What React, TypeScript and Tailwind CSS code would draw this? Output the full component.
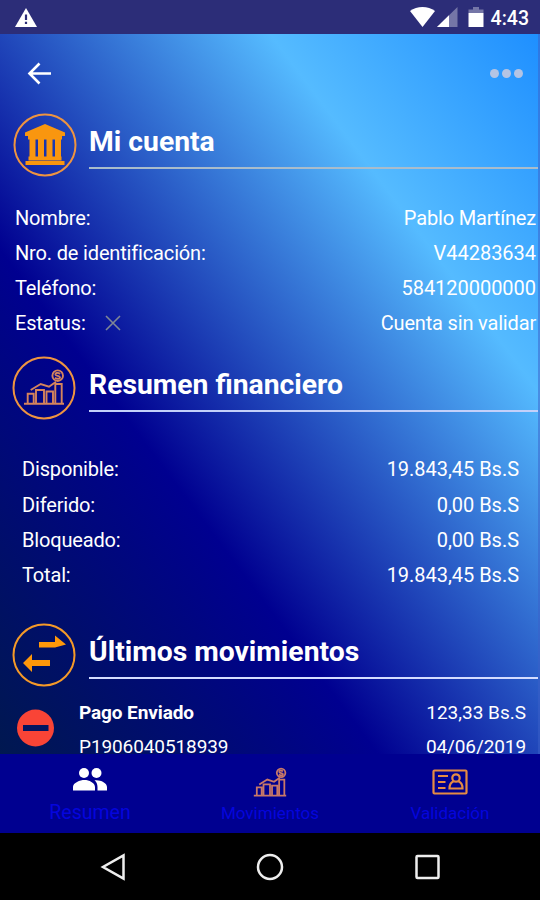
import type { ReactNode } from 'react';

const account = [
  { label: 'Nombre:', value: 'Pablo Martínez' },
  { label: 'Nro. de identificación:', value: 'V44283634' },
  { label: 'Teléfono:', value: '584120000000' },
  { label: 'Estatus:', value: 'Cuenta sin validar', invalid: true },
];

const balances = [
  { label: 'Disponible:', value: '19.843,45 Bs.S' },
  { label: 'Diferido:', value: '0,00 Bs.S' },
  { label: 'Bloqueado:', value: '0,00 Bs.S' },
  { label: 'Total:', value: '19.843,45 Bs.S' },
];

function BankIcon() {
  return (
    <svg viewBox="0 0 64 64" className="ml-px h-16 w-16" fill="#f9960f">
      <circle cx="32" cy="32" r="30.5" fill="none" stroke="#ee9440" strokeWidth="2" />
      <path d="M32 11 52 19.5V23H12v-3.5z" />
      <path d="M15 23h34v3.5H15zM15.5 43.500h33v4h-33zM12.500 48h39v4h-39z" />
      <path d="M16.500 26h6v19h-6zM25 26h6v19h-6zM33.500 26h6v19h-6zM42 26h6v19h-6z" />
    </svg>
  );
}

function ChartShapes() {
  return (
    <>
      <path d="M0 30.700h40M3.700 30v-9.300h6V30M12 30V17h8v13M22.500 30V18.500h6.500V30M31.300 30V11h6.400v19" />
      <path d="M6.700 17l10-6 8.300 2.700 7-5" />
      <circle cx="33.700" cy="2.700" r="5.300" />
      <path d="M36 1c-2-2-5-1-4.500.7.500 1.500 4.500 1 4.500 2.700 0 1.700-3 1.900-5 .3" />
    </>
  );
}

function ChartIcon() {
  return (
    <svg viewBox="0 0 64 64" className="h-16 w-16" fill="none" stroke="#d5845c" strokeWidth="1.900">
      <circle cx="32" cy="32" r="30.5" stroke="#ee9440" strokeWidth="2" />
      <g transform="translate(12 17)">
        <ChartShapes />
      </g>
    </svg>
  );
}

function TransferIcon() {
  return (
    <svg viewBox="0 0 64 64" className="h-16 w-16" fill="#ff980a">
      <circle cx="32" cy="32" r="30.5" fill="none" stroke="#f59a28" strokeWidth="2" />
      <path d="M27 19h16v-6.500l11 9-11 3H27z" />
      <path d="M38 37H20v-6l-9 9 9 9v-6h18z" />
    </svg>
  );
}

function SectionHeader({ icon, title, line }: { icon: ReactNode; title: string; line: string }) {
  return (
    <div className="flex h-16 pl-3">
      <div className="w-[77px]">{icon}</div>
      <div className={`mr-0.5 flex h-[56px] flex-1 items-center border-b-2 pt-[5px] ${line}`}>
        <h2 className="text-[28.300px] leading-none font-bold">{title}</h2>
      </div>
    </div>
  );
}

function Row({ label, value, invalid }: { label: string; value: string; invalid?: boolean }) {
  const numeric = /\d/.test(value);
  return (
    <div className="flex h-[35.2px] items-center justify-between">
      <span className="flex items-center tracking-[-0.16px]">
        {label}
        {invalid && (
          <svg viewBox="0 0 16 16" className="ml-[19px] h-4 w-4" stroke="#7f8796" strokeWidth="1.600">
            <path d="M1 1l14 14M15 1L1 15" />
          </svg>
        )}
      </span>
      <span className={numeric ? 'tracking-[-0.03px]' : 'tracking-[-0.17px]'}>{value}</span>
    </div>
  );
}

function StatusBar() {
  return (
    <div className="flex h-[34px] shrink-0 items-center justify-between bg-[#2c2d78] pr-[11px] pl-[14px]">
      <svg viewBox="0 0 24 20" className="h-5 w-6">
        <path d="M12 1 23 20H1z" fill="#fff" />
        <path d="M10.900 7.500h2.200V13h-2.200zM10.900 14.800h2.200V17h-2.200z" fill="#2c2d78" />
      </svg>
      <div className="flex items-center">
        <svg viewBox="0 0 76 22" className="mr-1.5 h-[22px] w-[76px]" fill="#fff">
          <path d="M1 5C8-.3 19-.3 26 5L13.500 21z" />
          <path d="M48.500 1v20H28z" opacity=".35" />
          <path d="M40 9.300V21H28z" />
          <path d="M59.500 3.500H64V1h6v2.500h4.500V7h-15z" opacity=".35" />
          <path d="M59.500 7h15v14h-15z" />
        </svg>
        <span className="pt-[3px] text-[19.500px] font-medium">4:43</span>
      </div>
    </div>
  );
}

function TabBar() {
  return (
    <div className="grid h-[79px] shrink-0 grid-cols-3 bg-[#000090] text-[17px] text-[#0505dc]">
      <div className="flex flex-col items-center">
        <svg viewBox="0 0 36 24" className="mt-[13px] h-6 w-9" fill="#fff">
          <circle cx="12" cy="6" r="5" />
          <circle cx="24.500" cy="6" r="5" />
          <path d="M1 23.500V20c0-4.300 7-7 11.500-7S23 15.700 23 20v3.500zM25.500 23.500V20c0-3-1.200-5-3-6.700 5-.9 12.500 2 12.500 6.700v3.500z" />
        </svg>
        <span className="mt-2.5 text-[19.500px] leading-6">Resumen</span>
      </div>
      <div className="flex flex-col items-center">
        <svg viewBox="-1 -4 42 36" className="mt-[13px] h-[30px] w-[34px]" fill="none" stroke="#c87868" strokeWidth="2.200">
          <ChartShapes />
        </svg>
        <span className="mt-1 leading-6">Movimientos</span>
      </div>
      <div className="flex flex-col items-center">
        <svg viewBox="0 0 36 26" className="mt-[15px] h-[26px] w-9" fill="none" stroke="#e58b43" strokeWidth="2.200">
          <rect x="1.500" y="1.500" width="33" height="23" rx="1" />
          <path d="M6 7h10M6 13h7.500M6 19h7.500" />
          <circle cx="24" cy="9" r="3.700" />
          <path d="M21.500 12.500c-3 1-4 4-4 7h13c0-3-1-6-4-7" />
        </svg>
        <span className="mt-1.5 leading-6">Validación</span>
      </div>
    </div>
  );
}

function NavBar() {
  return (
    <div className="flex h-[67px] shrink-0 items-center justify-between bg-black px-[99px]">
      <svg viewBox="0 0 28 28" className="h-7 w-7" fill="none" stroke="#eee" strokeWidth="2.500">
        <path d="M24.500 2.500v23L4 14z" />
      </svg>
      <svg viewBox="0 0 28 28" className="h-7 w-7" fill="none" stroke="#eee" strokeWidth="2.500">
        <circle cx="14" cy="14" r="12" />
      </svg>
      <svg viewBox="0 0 28 28" className="h-7 w-7" fill="none" stroke="#eee" strokeWidth="2.500">
        <rect x="3.500" y="3" width="22" height="22" rx="1" />
      </svg>
    </div>
  );
}

export default function App() {
  return (
    <div className="flex h-[900px] w-[540px] flex-col overflow-hidden bg-black font-['Roboto',sans-serif] text-[20px] leading-none text-white">
      <StatusBar />
      <main className="h-[720px] overflow-hidden bg-[linear-gradient(to_top_right,#001850_0%,#000090_35%,#55bbff_75%,#1e8fff_100%)] shadow-[inset_-2px_0_0_#3b5fc880]">
        <div className="flex h-[79px] items-center justify-between pr-[17px] pl-[27px]">
          <svg viewBox="0 0 26 24" className="h-6 w-[26px]" fill="none" stroke="#fff" strokeWidth="2.600">
            <path d="M24 11.500H2.500M12.500 1.500l-10 10 10 10" />
          </svg>
          <div className="flex gap-[3px]">
            <span className="h-[9px] w-[9px] rounded-full bg-[#b4c4e4]" />
            <span className="h-[9px] w-[9px] rounded-full bg-[#b4c4e4]" />
            <span className="h-[9px] w-[9px] rounded-full bg-[#b4c4e4]" />
          </div>
        </div>
        <SectionHeader icon={<BankIcon />} title="Mi cuenta" line="border-[#a9bccb]" />
        <div className="mt-[23px] pr-1 pl-[15px]">
          {account.map((r) => (
            <Row key={r.label} {...r} />
          ))}
        </div>
        <div className="mt-[15px]">
          <SectionHeader icon={<ChartIcon />} title="Resumen financiero" line="border-[#c3d0fa]" />
        </div>
        <div className="mt-8 pr-[21px] pl-[22px]">
          {balances.map((r) => (
            <Row key={r.label} {...r} />
          ))}
        </div>
        <div className="mt-[30px]">
          <SectionHeader icon={<TransferIcon />} title="Últimos movimientos" line="border-[#d4dcff]" />
        </div>
        <div className="mt-[9px] flex items-start pr-[14px] pl-[17px] text-[19px]">
          <svg viewBox="0 0 38 38" className="mt-[13px] h-[38px] w-[38px]">
            <circle cx="18.500" cy="19" r="18.500" fill="#f94436" />
            <path d="M6 16h25.500v6H6z" fill="#031560" />
          </svg>
          <div className="ml-6 flex-1">
            <div className="flex h-[34px] items-center justify-between">
              <span className="font-bold tracking-[-0.1px]">Pago Enviado</span>
              <span>123,33 Bs.S</span>
            </div>
            <div className="flex h-[34px] items-center justify-between">
              <span className="tracking-[-0.1px]">P1906040518939</span>
              <span className="tracking-[-0.1px]">04/06/2019</span>
            </div>
          </div>
        </div>
      </main>
      <TabBar />
      <NavBar />
    </div>
  );
}
